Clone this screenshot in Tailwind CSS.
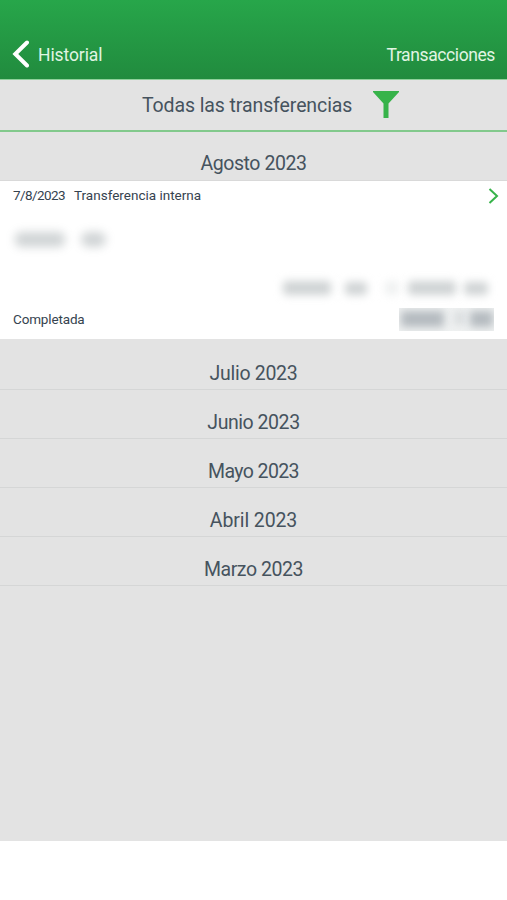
<!DOCTYPE html>
<html lang="es">
<head>
<meta charset="utf-8">
<title>Transacciones</title>
<script src="https://cdn.jsdelivr.net/npm/@tailwindcss/browser@4"></script>
</head>
<body class="bg-white">
<div class="w-[507px] h-[900px] flex flex-col overflow-hidden bg-white font-['Roboto','Liberation_Sans',sans-serif] text-[#46535e]">
  <header class="h-[79px] shrink-0 flex items-end justify-between pl-3 pr-3 pb-[11px] bg-linear-to-b from-[#27a64a] to-[#218b3e] text-[#e1f5e3]">
    <div class="flex items-center gap-[9px]">
      <svg class="w-[17px] h-[28px]" viewBox="0 0 17 28" fill="none" stroke="#fff" stroke-width="4" stroke-linecap="round" stroke-linejoin="miter"><path d="M15 2.5L3.3 14L15 25.5"/></svg>
      <span class="text-[17.5px] leading-7 tracking-[-0.1px] relative top-px">Historial</span>
    </div>
    <span class="text-[17.5px] leading-7 tracking-[-0.4px] relative top-px">Transacciones</span>
  </header>
  <div class="h-[53px] shrink-0 flex items-center border-t border-b-2 border-t-[#8fd09b] border-b-[#82c98c] bg-[#e3e3e3] pl-[142px] gap-5">
    <span class="text-[19.5px] leading-6 pt-0.5 whitespace-nowrap w-[211px] tracking-[-0.1px]">Todas las transferencias</span>
    <svg class="w-[26px] h-[27px] relative -top-px" viewBox="0 0 26 27" fill="#37b34a"><path d="M0 0H26V1L15.5 12.5V27H10.5V12.5L0 1Z"/></svg>
  </div>
  <main class="h-[709px] shrink-0 bg-[#e3e3e3] text-center text-[19.5px] tracking-[-0.45px]">
    <h2 class="h-[49px] pt-5 leading-6 border-b border-[#d9d9d9]">Agosto 2023</h2>
    <section class="h-[158px] bg-white flex flex-col justify-between text-left text-[13.5px] tracking-normal px-[13px] pt-1 pb-[10px] text-[#36434f]">
      <div class="flex items-center justify-between h-5">
        <div class="flex"><span class="w-[61px] tracking-[-0.6px]">7/8/2023</span><span>Transferencia interna</span></div>
        <svg class="w-[11px] h-[16px] -mr-[5px] relative top-px" viewBox="0 0 11 16" fill="none" stroke="#37b34a" stroke-width="2"><path d="M1.5 1L9 8L1.5 15"/></svg>
      </div>
      <div class="flex items-center gap-4 h-5 mt-3 opacity-35" aria-hidden="true">
        <i class="w-[50px] h-[15px] ml-0.5 bg-[#7b868a] blur-[5px] rounded-md"></i>
        <i class="w-[25px] h-[15px] bg-[#7b868a] blur-[5px] rounded-full"></i>
      </div>
      <div>
        <div class="flex items-center justify-end h-5 mb-[11px] pr-[6px] mt-4" aria-hidden="true">
          <i class="w-[48px] h-[14px] bg-[#cfd3d4] blur-[4px] mr-[14px] rounded"></i>
          <i class="w-[22px] h-[13px] bg-[#cfd3d4] blur-[4px] mr-[18px] rounded"></i>
          <i class="w-[14px] h-[14px] bg-[#eff1f1] blur-[4px] mr-[9px] rounded"></i>
          <i class="w-[48px] h-[14px] bg-[#cfd3d4] blur-[4px] mr-[8px] rounded"></i>
          <i class="w-[24px] h-[13px] bg-[#cfd3d4] blur-[4px] rounded"></i>
        </div>
        <div class="flex items-center justify-between h-5">
          <span class="tracking-[-0.15px]">Completada</span>
          <div class="flex w-[95px] h-[23px] overflow-hidden bg-[#f0f2f2]" aria-hidden="true">
            <i class="w-[43px] h-[16px] mt-[3px] ml-0.5 bg-[#b4babf] blur-[4px]"></i>
            <i class="w-[9px] h-[14px] mt-[3px] ml-[11px] bg-[#d5d9db] blur-[4px]"></i>
            <i class="w-[23px] h-[16px] mt-[3px] ml-[6px] bg-[#b4babf] blur-[4px]"></i>
          </div>
        </div>
      </div>
    </section>
    <div class="h-[51px] pt-[23px] leading-6 border-b border-[#d5d6d6] tracking-[-0.3px]">Julio 2023</div>
    <div class="h-[49px] pt-[21px] leading-6 border-b border-[#d5d6d6]">Junio 2023</div>
    <div class="h-[49px] pt-[21px] leading-6 border-b border-[#d5d6d6] tracking-[-0.6px]">Mayo 2023</div>
    <div class="h-[49px] pt-[21px] leading-6 border-b border-[#d5d6d6] tracking-[-0.1px]">Abril 2023</div>
    <div class="h-[49px] pt-[21px] leading-6 border-b border-[#d5d6d6]">Marzo 2023</div>
  </main>
</div>
</body>
</html>
